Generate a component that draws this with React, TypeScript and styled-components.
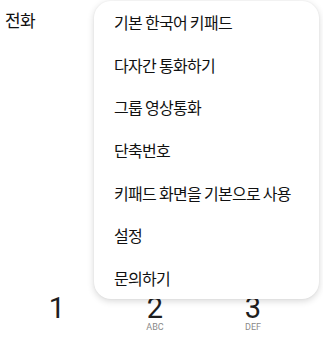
import React from "react";
import styled, { createGlobalStyle } from "styled-components";

const GlobalStyle = createGlobalStyle`
  html, body {
    margin: 0;
    padding: 0;
    background: #ffffff;
  }
  #root {
    height: 345px;
  }
`;

const menuItems = [
  "기본 한국어 키패드",
  "다자간 통화하기",
  "그룹 영상통화",
  "단축번호",
  "키패드 화면을 기본으로 사용",
  "설정",
  "문의하기",
];

const keys = [
  { digit: "1", letters: "" },
  { digit: "2", letters: "ABC" },
  { digit: "3", letters: "DEF" },
];

const Screen = styled.div`
  position: relative;
  width: 323px;
  height: 345px;
  overflow: hidden;
  background: #ffffff;
  display: flex;
  flex-direction: column;
`;

const Header = styled.div`
  height: 294px;
  padding: 9px 0 0 5px;
  box-sizing: border-box;
  font-family: "Noto Sans CJK KR", "Noto Sans", sans-serif;
  font-size: 17px;
  line-height: 22px;
  letter-spacing: -0.6px;
  color: #111111;
`;

const Keypad = styled.div`
  display: grid;
  grid-template-columns: repeat(3, 98px);
  padding-left: 8px;
`;

const Key = styled.div`
  display: flex;
  flex-direction: column;
  align-items: center;
`;

const Digit = styled.div`
  font-family: Roboto, "Liberation Sans", sans-serif;
  font-weight: 400;
  font-size: 29px;
  line-height: 29px;
  color: #1e1e1e;
`;

const Letters = styled.div`
  font-family: Roboto, "Liberation Sans", sans-serif;
  font-size: 9px;
  line-height: 9px;
  color: #8a8a8a;
`;

const Menu = styled.ul`
  position: absolute;
  top: 1px;
  left: 94px;
  width: 225px;
  margin: 0;
  padding: 0;
  list-style: none;
  background: #ffffff;
  border-radius: 17px;
  box-shadow: 0 2px 7px rgba(0, 0, 0, 0.16), 0 0 2px rgba(0, 0, 0, 0.06);
  z-index: 2;
`;

const MenuItem = styled.li`
  height: 42.6px;
  display: flex;
  align-items: center;
  padding-left: 20px;
  font-family: "Noto Sans CJK KR", "Noto Sans", sans-serif;
  font-size: 16px;
  letter-spacing: -0.7px;
  color: #111111;
`;

export default function App() {
  return (
    <>
      <GlobalStyle />
      <Screen>
        <Header>전화</Header>
        <Keypad>
          {keys.map((k) => (
            <Key key={k.digit}>
              <Digit>{k.digit}</Digit>
              <Letters>{k.letters}</Letters>
            </Key>
          ))}
        </Keypad>
        <Menu>
          {menuItems.map((item) => (
            <MenuItem key={item}>{item}</MenuItem>
          ))}
        </Menu>
      </Screen>
    </>
  );
}
